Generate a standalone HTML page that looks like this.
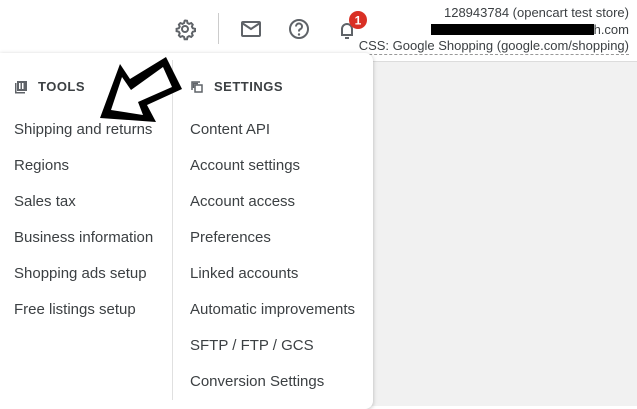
<!DOCTYPE html>
<html><head><style>
body{margin:0;width:637px;height:405px;overflow:hidden;background:#fff;font-family:"Liberation Sans",Arial,sans-serif;position:relative}
.bg{position:absolute;left:0;top:61px;width:637px;height:344px;background:#f1f1f1;border-top:1px solid #dcdcdc}
.panel{position:absolute;left:0;top:53px;width:373px;height:356px;background:#fff;border-radius:0 8px 8px 0;box-shadow:0 1px 4px rgba(0,0,0,.25)}
.div{position:absolute;left:172px;top:60px;width:1px;height:340px;background:#e0e0e0}
.it{position:absolute;font-size:15px;color:#3c4043;white-space:nowrap}
.hd{position:absolute;font-size:13px;font-weight:bold;color:#3c4043;letter-spacing:.5px}
.tr{position:absolute;right:8px;font-size:13px;color:#3c4043;text-align:right;white-space:nowrap}
</style></head><body>
<div class="bg"></div>
<div class="tr" style="top:5px">128943784 (opencart test store)</div>
<div class="tr" style="top:22px"><span style="display:inline-block;width:163px;height:11px;background:#000;vertical-align:-1px"></span>h.com</div>
<div class="tr" style="top:38px;border-bottom:1px dashed #999;padding-bottom:1px">CSS: Google Shopping (google.com/shopping)</div>
<svg style="position:absolute;left:0;top:0" width="380" height="60">
<g fill="none" stroke="#5f6368" stroke-width="2">
<circle cx="185" cy="29" r="3"/>
<path d="M185 20.5l2 .3.5 2.2 1.6.9 2.1-.8 1.5 1.5-.8 2.1.9 1.6 2.2.5v2.4l-2.2.5-.9 1.6.8 2.1-1.5 1.5-2.1-.8-1.6.9-.5 2.2h-2.4l-.5-2.2-1.6-.9-2.1.8-1.5-1.5.8-2.1-.9-1.6-2.2-.5v-2.4l2.2-.5.9-1.6-.8-2.1 1.5-1.5 2.1.8 1.6-.9.5-2.2z"/>
<rect x="242" y="22" width="18" height="14" rx="1"/>
<path d="M242 23l9 6 9-6"/>
<circle cx="299" cy="29" r="9"/>
<path d="M296 26.5a3 3 0 1 1 4 2.8c-1 .5-1 1-1 2.2"/>
<path d="M341 35h12M342 35v-6a5 5 0 0 1 10 0v6M345 38h4"/>
</g>
<circle cx="299" cy="34.5" r="1.2" fill="#5f6368"/>
<rect x="218" y="13" width="1" height="31" fill="#ccc"/>
<circle cx="358" cy="20" r="9" fill="#d93025"/>
<text x="358" y="24.5" font-size="12" font-weight="bold" fill="#fff" text-anchor="middle" font-family="Liberation Sans">1</text>
</svg>
<div class="panel"></div>
<div class="div"></div>
<svg style="position:absolute;left:14px;top:80px" width="14" height="14"><g fill="#5f6368"><rect x="3" y="1" width="10" height="10"/><rect x="1" y="3" width="1.5" height="10"/><rect x="1" y="12" width="10" height="1.5"/></g><g fill="#fff"><rect x="5" y="3" width="1.5" height="6"/><rect x="8" y="3" width="1.5" height="6"/></g></svg>
<div class="hd" style="left:38px;top:79px">TOOLS</div>
<svg style="position:absolute;left:190px;top:80px" width="14" height="14"><g fill="none" stroke="#5f6368" stroke-width="1.5"><rect x="5" y="5" width="7" height="7"/><path d="M2 10V2h8"/><path d="M3.5 8V3.5H8"/></g></svg>
<div class="hd" style="left:214px;top:79px">SETTINGS</div>
<div class="it" style="left:14px;top:121px">Shipping and returns</div>
<div class="it" style="left:14px;top:157px">Regions</div>
<div class="it" style="left:14px;top:193px">Sales tax</div>
<div class="it" style="left:14px;top:229px">Business information</div>
<div class="it" style="left:14px;top:265px">Shopping ads setup</div>
<div class="it" style="left:14px;top:301px">Free listings setup</div>
<div class="it" style="left:190px;top:121px">Content API</div>
<div class="it" style="left:190px;top:157px">Account settings</div>
<div class="it" style="left:190px;top:193px">Account access</div>
<div class="it" style="left:190px;top:229px">Preferences</div>
<div class="it" style="left:190px;top:265px">Linked accounts</div>
<div class="it" style="left:190px;top:301px">Automatic improvements</div>
<div class="it" style="left:190px;top:337px">SFTP / FTP / GCS</div>
<div class="it" style="left:190px;top:373px">Conversion Settings</div>
<svg style="position:absolute;left:0;top:0" width="200" height="140">
<polygon points="100,118 120,64 130,79 166,57 182,89 147,105 156,122" fill="#000"/>
<polygon points="111,110 122,77 131,90 163,67 172,87 138,102 143,115" fill="#fff"/>
</svg>
</body></html>
